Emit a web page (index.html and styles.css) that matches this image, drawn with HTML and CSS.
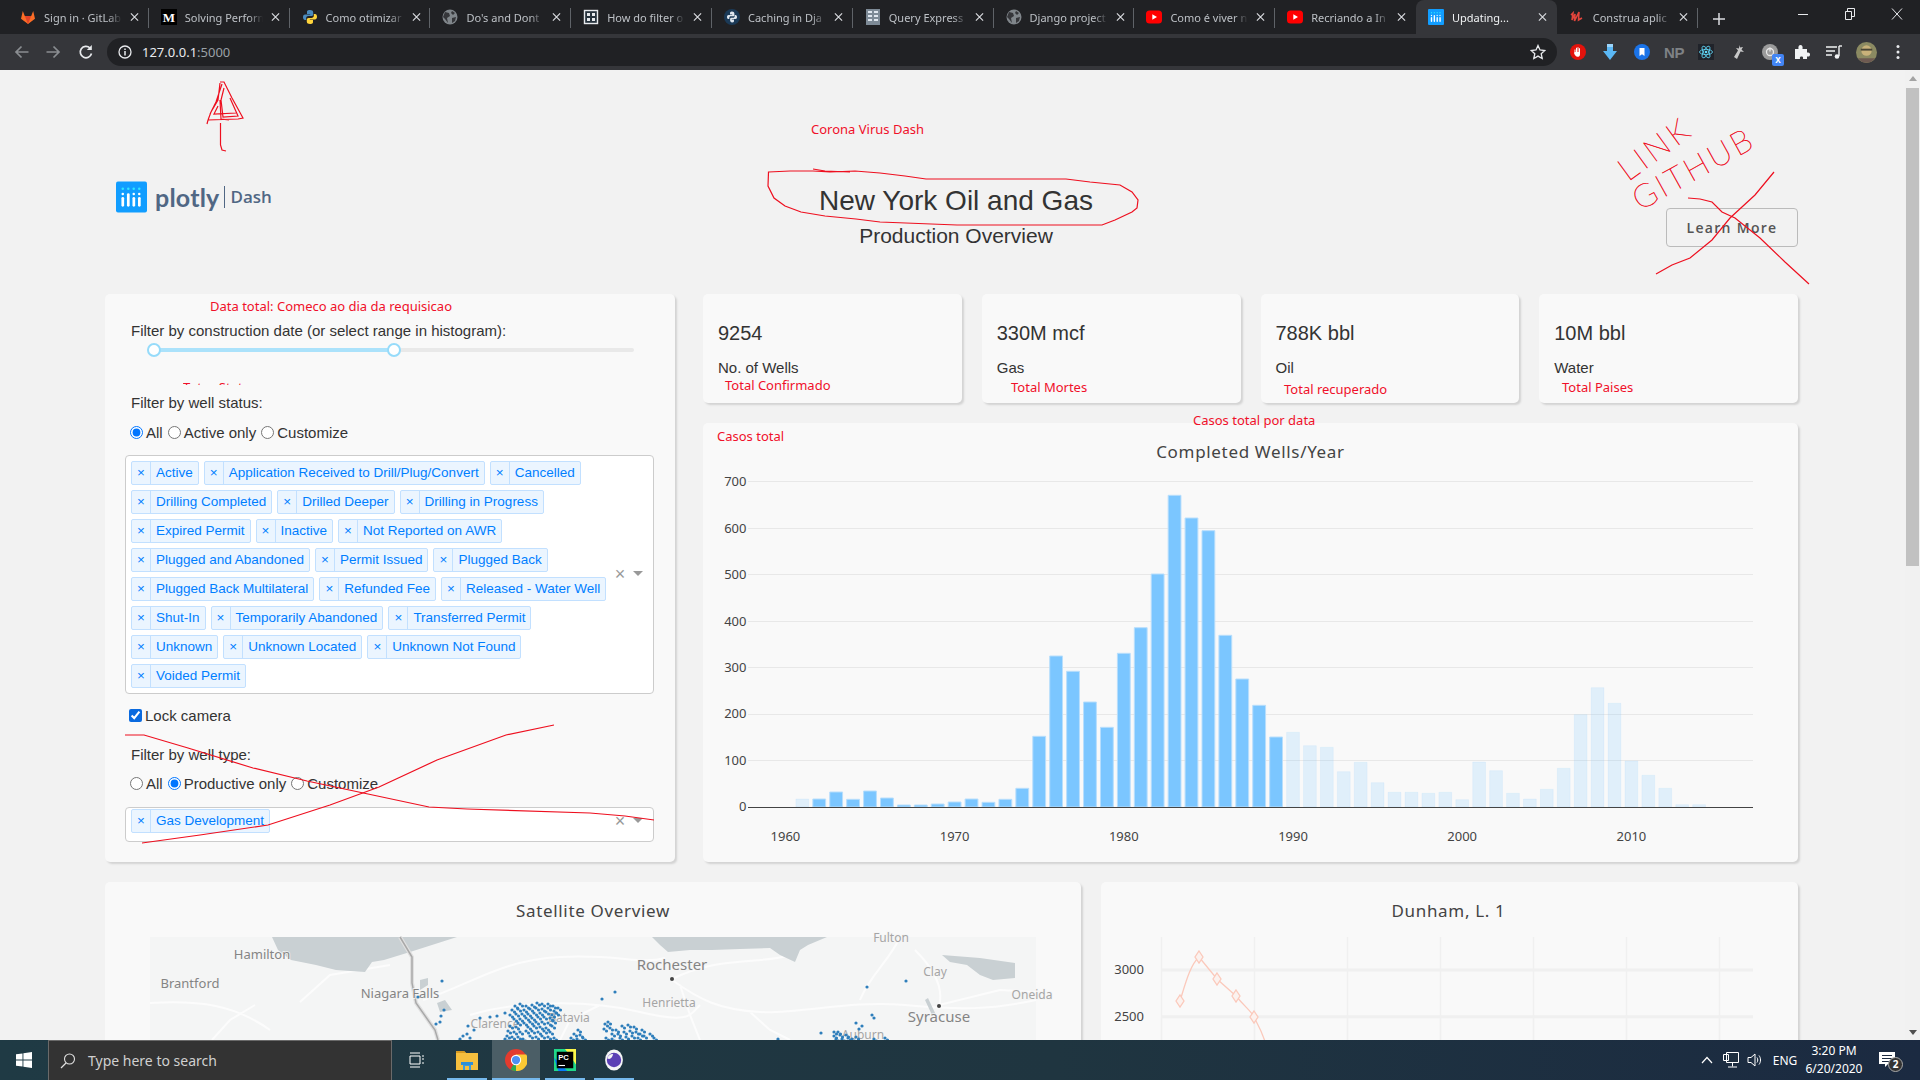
FILE: index.html
```html
<!DOCTYPE html>
<html lang="en">
<head>
<meta charset="utf-8">
<title>Updating...</title>
<link rel="stylesheet" href="styles.css">
</head>
<body>
<svg class="defs" width="0" height="0" aria-hidden="true">
  <symbol id="i-globe" viewBox="0 0 16 16"><circle cx="8" cy="8" r="7.5" fill="#80868b"/><path d="M3 3l4 1 1 3-3 2 1 5-3-4-2-2zM10 2l3 2-2 2-2-2zM10 9l4-1-1 4-3 2z" fill="#35363a"/></symbol>
  <symbol id="i-yt" viewBox="0 0 16 16"><rect y="1.5" width="16" height="13" rx="3.5" fill="#f00"/><path d="M6.3 5.2v5.6L11 8z" fill="#fff"/></symbol>
  <symbol id="i-py" viewBox="0 0 16 16"><path d="M8 1C5 1 5 2 5 3.5V5h3.2v.6H3.2C1.5 5.6 1 7 1 8.3s.6 2.7 2 2.7h1.2V9.3c0-1.300 1-2.200 2.300-2.200h3c1 0 1.700-.8 1.700-1.800V3.200C11.200 1.800 9.800 1 8 1z" fill="#4b8bbe"/><path d="M8 15c3 0 3-1 3-2.500V11H7.800v-.6h5c1.700 0 2.200-1.400 2.200-2.700S14.400 5 13 5h-1.200v1.700c0 1.300-1 2.200-2.300 2.200h-3c-1 0-1.700.8-1.700 1.800v2.100C4.800 14.200 6.200 15 8 15z" fill="#ffd43b"/></symbol>
  <symbol id="i-plotly" viewBox="0 0 32 32"><rect width="32" height="32" rx="2" fill="#119dff"/><g fill="#2ee6ff"><circle cx="7" cy="7.500" r="1.300"/><circle cx="12.700" cy="7.500" r="1.300"/><circle cx="18.300" cy="7.500" r="1.300"/><circle cx="24" cy="7.500" r="1.300"/></g><g fill="#fff"><circle cx="7" cy="13" r="1.300"/><circle cx="18.300" cy="13" r="1.300"/><circle cx="24" cy="13" r="1.300"/><rect x="5.600" y="16" width="2.800" height="10" rx="1.400"/><rect x="11.300" y="12" width="2.800" height="14" rx="1.400"/><rect x="17" y="16" width="2.800" height="10" rx="1.400"/><rect x="22.700" y="16" width="2.800" height="10" rx="1.400"/></g></symbol>
  <symbol id="i-x" viewBox="0 0 10 10"><path d="M1 1l8 8M9 1l-8 8" stroke="currentColor" stroke-width="1.300" fill="none"/></symbol>
</svg>

<div class="screen">
  <div class="tabstrip">
    <div class="tab"><svg class="fav" viewBox="0 0 16 16"><path d="M8 15L1 9.800 2.800 2l2 5h6.400l2-5L15 9.800z" fill="#fc6d26"/><path d="M8 15L4.800 7h6.400z" fill="#e24329"/></svg><span class="tab-title">Sign in · GitLab</span><svg class="tab-x"><use href="#i-x"/></svg></div>
    <div class="tab"><svg class="fav" viewBox="0 0 16 16"><rect width="16" height="16" fill="#000"/><text x="8" y="12.500" class="fav-m">M</text></svg><span class="tab-title">Solving Perform</span><svg class="tab-x"><use href="#i-x"/></svg></div>
    <div class="tab"><svg class="fav"><use href="#i-py"/></svg><span class="tab-title">Como otimizar</span><svg class="tab-x"><use href="#i-x"/></svg></div>
    <div class="tab"><svg class="fav"><use href="#i-globe"/></svg><span class="tab-title">Do's and Dont</span><svg class="tab-x"><use href="#i-x"/></svg></div>
    <div class="tab"><svg class="fav" viewBox="0 0 16 16"><rect x="1.500" y="1.500" width="13" height="13" fill="#26323c" stroke="#e8eaed" stroke-width="1.400"/><path d="M4 4h3v3H4zM9 4h3v3H9zM4 9h3v3H4zM9 9h3v3H9z" fill="#e8eaed"/></svg><span class="tab-title">How do filter o</span><svg class="tab-x"><use href="#i-x"/></svg></div>
    <div class="tab"><svg class="fav" viewBox="0 0 16 16"><circle cx="8" cy="8" r="8" fill="#1b3a57"/><path d="M8 2.500C6 2.500 6 3.500 6 4.500v1h2.200V6H4.500C3.300 6 3 7 3 8s.4 2 1.400 2h.9V8.800c0-.9.700-1.500 1.500-1.500h2.400c.7 0 1.200-.6 1.200-1.300V4.400c0-1.100-1-1.900-2.400-1.900zM8 13.500c2 0 2-1 2-2v-1H7.800V10h3.700c1.200 0 1.500-1 1.500-2s-.4-2-1.400-2h-.9v1.200c0 .9-.7 1.500-1.500 1.500H7.300c-.7 0-1.200.6-1.200 1.300v1.600c0 1.100 1 1.900 1.900 1.900z" fill="#dfe6ee"/></svg><span class="tab-title">Caching in Dja</span><svg class="tab-x"><use href="#i-x"/></svg></div>
    <div class="tab"><svg class="fav" viewBox="0 0 16 16"><rect x="1" y="0" width="14" height="16" fill="#7d8a96"/><path d="M3 2h4v2H3zM9 2h4v2H9zM3 6h4v2H3zM9 6h4v2H9zM3 10h4v2H3zM9 10h4v2H9z" fill="#dfe6ee"/></svg><span class="tab-title">Query Express</span><svg class="tab-x"><use href="#i-x"/></svg></div>
    <div class="tab"><svg class="fav"><use href="#i-globe"/></svg><span class="tab-title">Django project</span><svg class="tab-x"><use href="#i-x"/></svg></div>
    <div class="tab"><svg class="fav"><use href="#i-yt"/></svg><span class="tab-title">Como é viver n</span><svg class="tab-x"><use href="#i-x"/></svg></div>
    <div class="tab tab-prev"><svg class="fav"><use href="#i-yt"/></svg><span class="tab-title">Recriando a In</span><svg class="tab-x"><use href="#i-x"/></svg></div>
    <div class="tab tab-active"><svg class="fav"><use href="#i-plotly"/></svg><span class="tab-title">Updating...</span><svg class="tab-x"><use href="#i-x"/></svg></div>
    <div class="tab"><svg class="fav" viewBox="0 0 16 16"><path d="M2 6l2-2-1 7 3-6-.5 7L10 3l-.5 8 3.500-2" fill="none" stroke="#e2453c" stroke-width="1.600"/></svg><span class="tab-title">Construa aplic</span><svg class="tab-x"><use href="#i-x"/></svg></div>
    <svg class="newtab" viewBox="0 0 12 12"><path d="M6 0v12M0 6h12" stroke="#dadce0" stroke-width="1.500"/></svg>
    <div class="winctl">
      <svg viewBox="0 0 12 12"><path d="M1 6.500h10" stroke="#e8eaed"/></svg>
      <svg viewBox="0 0 12 12"><path d="M1.500 3.500h6v8h-6zM3.500 3.500v-3h7v8h-3" fill="none" stroke="#e8eaed"/></svg>
      <svg viewBox="0 0 12 12"><path d="M1 .5l10 11M11 .5l-10 11" stroke="#e8eaed"/></svg>
    </div>
  </div>

  <div class="toolbar">
    <svg class="nav" viewBox="0 0 16 16"><path d="M14.500 8H2M7.500 2.500L2 8l5.500 5.500" fill="none" stroke="#8a8d91" stroke-width="1.700"/></svg>
    <svg class="nav" viewBox="0 0 16 16"><path d="M1.500 8H14M8.500 2.500L14 8l-5.500 5.500" fill="none" stroke="#8a8d91" stroke-width="1.700"/></svg>
    <svg class="nav" viewBox="0 0 16 16"><path d="M13.500 9.500A5.700 5.700 0 1 1 12 4" fill="none" stroke="#e8eaed" stroke-width="1.700"/><path d="M13.800 1v5h-5z" fill="#e8eaed"/></svg>
    <div class="omnibox">
      <svg class="info" viewBox="0 0 14 14"><circle cx="7" cy="7" r="6" fill="none" stroke="#e8eaed" stroke-width="1.300"/><path d="M7 6v4.500M7 3.400v1.500" stroke="#e8eaed" stroke-width="1.500"/></svg>
      <span class="url">127.0.0.1<span class="url-port">:5000</span></span>
      <svg class="star" viewBox="0 0 16 16"><path d="M8 1.500l2 4.500 4.800.5-3.600 3.200 1 4.800L8 12.100l-4.200 2.400 1-4.800L1.200 6.500 6 6z" fill="none" stroke="#e8eaed" stroke-width="1.300"/></svg>
    </div>
    <div class="exts">
      <span class="ext"><svg viewBox="0 0 16 16"><circle cx="8" cy="8" r="8" fill="#e3120b"/><path d="M4.500 8V5.500h1V8h.5V3.800h1V8h.5V3.300h1V8h.5V4.300h1v5.900C10 12 9 12.800 7.500 12.800 6 12.800 5 11.500 4 9l.5-1z" fill="#fff"/></svg></span>
      <span class="ext"><svg viewBox="0 0 16 16"><path d="M5 0h6v7h4l-7 9-7-9h4z" fill="#5bb8f5"/><path d="M5 0h6v3H5z" fill="#9ad4fa"/></svg></span>
      <span class="ext"><svg viewBox="0 0 16 16"><circle cx="8" cy="8" r="8" fill="#1a73e8"/><path d="M5.500 4h5v8L8 10.300 5.500 12z" fill="#fff"/></svg></span>
      <span class="ext ext-np">NP</span>
      <span class="ext"><svg viewBox="0 0 16 16"><rect width="16" height="16" fill="#20232a"/><g fill="none" stroke="#61dafb" stroke-width=".8"><ellipse cx="8" cy="8" rx="6.500" ry="2.600"/><ellipse cx="8" cy="8" rx="6.500" ry="2.600" transform="rotate(60 8 8)"/><ellipse cx="8" cy="8" rx="6.500" ry="2.600" transform="rotate(120 8 8)"/></g><circle cx="8" cy="8" r="1.300" fill="#61dafb"/></svg></span>
      <span class="ext"><svg viewBox="0 0 16 16"><path d="M9 1l1 2.500L13 3l-1.500 2.500L14 8l-3.500-.5L7 15l-3-2 4-6.500L6 4l3 .5z" fill="#c8c8c8"/></svg></span>
      <span class="ext ext-badged"><svg viewBox="0 0 16 16"><circle cx="8" cy="8" r="8" fill="#9b9b9b"/><circle cx="8" cy="8" r="3.500" fill="none" stroke="#e8e8e8" stroke-width="1.300"/><path d="M8 3.500v4" stroke="#e8e8e8" stroke-width="1.300"/></svg><span class="badge-x">x</span></span>
      <span class="ext"><svg viewBox="0 0 16 16"><path d="M1 5h3.500C4 2.500 5 1 6.500 1S9 2.500 8.500 5H13v3.500c2.500-.5 3 .8 3 2s-.5 2.500-3 2V15H9c.5-2-.5-2.500-1.500-2.500S5.500 13 6 15H1z" fill="#f1f3f4"/></svg></span>
      <span class="ext"><svg viewBox="0 0 16 16"><path d="M0 3h11M0 7h9M0 11h6" stroke="#f1f3f4" stroke-width="1.400"/><path d="M13 2v10" stroke="#f1f3f4" stroke-width="1.400"/><path d="M13 2h3" stroke="#f1f3f4" stroke-width="1.400"/><circle cx="11" cy="12.500" r="2.300" fill="#f1f3f4"/></svg></span>
      <span class="ext"><svg class="avatar" viewBox="0 0 22 22"><circle cx="11" cy="11" r="11" fill="#8b8a62"/><path d="M2 17h18a11 11 0 0 1-18 0z" fill="#6e5a52"/><circle cx="11" cy="9" r="5.500" fill="#c9b27a"/><path d="M5 7h12v2H5z" fill="#4a4636"/></svg></span>
      <span class="ext"><svg class="dots" viewBox="0 0 4 16"><circle cx="2" cy="2.500" r="1.500" fill="#e8eaed"/><circle cx="2" cy="8" r="1.500" fill="#e8eaed"/><circle cx="2" cy="13.500" r="1.500" fill="#e8eaed"/></svg></span>
    </div>
  </div>

  <div class="viewport">
    <main class="page">
      <header class="head">
        <div class="logo">
          <svg class="logo-mark"><use href="#i-plotly"/></svg>
          <span class="logo-word">plotly</span>
          <span class="logo-dash">Dash</span>
        </div>
        <div class="title">
          <h1>New York Oil and Gas</h1>
          <h2>Production Overview</h2>
        </div>
        <a class="learn">Learn More</a>
      </header>

      <div class="main-row">
        <section class="card filters">
          <div class="lbl">Filter by construction date (or select range in histogram):</div>
          <div class="slider"><div class="slider-fill"><span class="handle"></span><span class="handle"></span></div></div>
          <div class="lbl lbl-status">Filter by well status:</div>
          <div class="radios">
            <label><input type="radio" name="a" checked>All</label>
            <label><input type="radio" name="a">Active only</label>
            <label><input type="radio" name="a">Customize</label>
          </div>
          <div class="select select-big">
            <div class="tags">
              <span class="tag"><i>×</i><b>Active</b></span>
              <span class="tag"><i>×</i><b>Application Received to Drill/Plug/Convert</b></span>
              <span class="tag"><i>×</i><b>Cancelled</b></span>
              <span class="tag"><i>×</i><b>Drilling Completed</b></span>
              <span class="tag"><i>×</i><b>Drilled Deeper</b></span>
              <span class="tag"><i>×</i><b>Drilling in Progress</b></span>
              <span class="tag"><i>×</i><b>Expired Permit</b></span>
              <span class="tag"><i>×</i><b>Inactive</b></span>
              <span class="tag"><i>×</i><b>Not Reported on AWR</b></span>
              <span class="tag"><i>×</i><b>Plugged and Abandoned</b></span>
              <span class="tag"><i>×</i><b>Permit Issued</b></span>
              <span class="tag"><i>×</i><b>Plugged Back</b></span>
              <span class="tag"><i>×</i><b>Plugged Back Multilateral</b></span>
              <span class="tag"><i>×</i><b>Refunded Fee</b></span>
              <span class="tag"><i>×</i><b>Released - Water Well</b></span>
              <span class="tag"><i>×</i><b>Shut-In</b></span>
              <span class="tag"><i>×</i><b>Temporarily Abandoned</b></span>
              <span class="tag"><i>×</i><b>Transferred Permit</b></span>
              <span class="tag"><i>×</i><b>Unknown</b></span>
              <span class="tag"><i>×</i><b>Unknown Located</b></span>
              <span class="tag"><i>×</i><b>Unknown Not Found</b></span>
              <span class="tag"><i>×</i><b>Voided Permit</b></span>
            </div>
            <span class="sel-clear">×</span><span class="sel-arrow"></span>
          </div>
          <label class="lock"><input type="checkbox" checked>Lock camera</label>
          <div class="lbl lbl-type">Filter by well type:</div>
          <div class="radios radios-type">
            <label><input type="radio" name="b">All</label>
            <label><input type="radio" name="b" checked>Productive only</label>
            <label><input type="radio" name="b">Customize</label>
          </div>
          <div class="select select-small">
            <div class="tags tags-small"><span class="tag"><i>×</i><b>Gas Development</b></span></div>
            <span class="sel-clear">×</span><span class="sel-arrow"></span>
          </div>
        </section>

        <div class="right-col">
          <div class="stats">
            <div class="card stat"><div class="stat-val">9254</div><div class="stat-lbl">No. of Wells</div></div>
            <div class="card stat"><div class="stat-val">330M mcf</div><div class="stat-lbl">Gas</div></div>
            <div class="card stat"><div class="stat-val">788K bbl</div><div class="stat-lbl">Oil</div></div>
            <div class="card stat"><div class="stat-val">10M bbl</div><div class="stat-lbl">Water</div></div>
          </div>
          <section class="card chart">
            <svg class="plot" viewBox="703 423 1095 439">
              <text x="1250.500" y="458" class="ch-title">Completed Wells/Year</text>
              <g class="grid">
                <path d="M748 481.500H1753M748 528.500H1753M748 574.500H1753M748 621.500H1753M748 667.500H1753M748 714.500H1753M748 760.500H1753"/>
              </g>
              <g class="ticks ticks-y">
                <text x="746.500" y="486">700</text><text x="746.500" y="532.500">600</text><text x="746.500" y="579">500</text><text x="746.500" y="625.500">400</text><text x="746.500" y="671.500">300</text><text x="746.500" y="718">200</text><text x="746.500" y="764.500">100</text><text x="746.500" y="811">0</text>
              </g>
              <g class="ticks ticks-x">
                <text x="785.400" y="840.500">1960</text><text x="954.600" y="840.500">1970</text><text x="1123.800" y="840.500">1980</text><text x="1293" y="840.500">1990</text><text x="1462.200" y="840.500">2000</text><text x="1631.400" y="840.500">2010</text>
              </g>
              <g transform="translate(779 807) scale(16.92 -1)">
                <g class="bar-off">
                  <rect x="1" width=".757" height="8"/>
                  <rect x="30" width=".757" height="74.700"/><rect x="31" width=".757" height="61.300"/><rect x="32" width=".757" height="59.700"/><rect x="33" width=".757" height="35.300"/><rect x="34" width=".757" height="44.700"/><rect x="35" width=".757" height="24.300"/><rect x="36" width=".757" height="14.700"/><rect x="37" width=".757" height="14.700"/><rect x="38" width=".757" height="13.700"/><rect x="39" width=".757" height="14.700"/><rect x="40" width=".757" height="7.300"/><rect x="41" width=".757" height="45"/><rect x="42" width=".757" height="36.300"/><rect x="43" width=".757" height="13.700"/><rect x="44" width=".757" height="8"/><rect x="45" width=".757" height="17.700"/><rect x="46" width=".757" height="38.700"/><rect x="47" width=".757" height="92.300"/><rect x="48" width=".757" height="119.300"/><rect x="49" width=".757" height="103.700"/><rect x="50" width=".757" height="46"/><rect x="51" width=".757" height="31.700"/><rect x="52" width=".757" height="18.700"/><rect x="53" width=".757" height="2.300"/><rect x="54" width=".757" height="2.300"/>
                </g>
                <g class="bar-on">
                  <rect x="2" width=".757" height="8"/><rect x="3" width=".757" height="15"/><rect x="4" width=".757" height="7.700"/><rect x="5" width=".757" height="16"/><rect x="6" width=".757" height="9"/><rect x="7" width=".757" height="2"/><rect x="8" width=".757" height="2"/><rect x="9" width=".757" height="3"/><rect x="10" width=".757" height="5"/><rect x="11" width=".757" height="8"/><rect x="12" width=".757" height="4.700"/><rect x="13" width=".757" height="7.700"/><rect x="14" width=".757" height="18.700"/><rect x="15" width=".757" height="70.700"/><rect x="16" width=".757" height="151"/><rect x="17" width=".757" height="135.700"/><rect x="18" width=".757" height="105"/><rect x="19" width=".757" height="79.700"/><rect x="20" width=".757" height="153.700"/><rect x="21" width=".757" height="179.300"/><rect x="22" width=".757" height="233"/><rect x="23" width=".757" height="311.700"/><rect x="24" width=".757" height="289"/><rect x="25" width=".757" height="276.300"/><rect x="26" width=".757" height="171.700"/><rect x="27" width=".757" height="128"/><rect x="28" width=".757" height="101.700"/><rect x="29" width=".757" height="70"/>
                </g>
              </g>
              <path class="zero" d="M748 807.500H1753"/>
            </svg>
          </section>
        </div>
      </div>

      <div class="bottom-row">
        <section class="card lower">
          <svg class="plot" viewBox="105 882 976 400">
            <text x="593" y="917" class="ch-title">Satellite Overview</text>
            <rect x="150" y="937" width="886" height="345" class="map-land"/>
            <g class="map-roads">
              <path d="M150 1003C200 1000 235 1005 270 1030M212 1040L230 1020 255 1005M300 1002L330 975 390 965M423 1000C470 985 500 960 560 957S640 965 665 958M470 1015C520 1000 590 1000 640 1012S690 1015 700 1005M672 979C720 955 760 965 790 955M672 980C700 1000 720 1010 760 1012S850 1000 905 1005 990 1010 1036 1000M560 1040L570 1020 600 1005M860 1000C870 975 890 960 900 937M939 1006C945 985 930 965 915 950M939 1005L1000 990 1036 992M750 1012L770 1030 790 1040M680 985L690 1015 700 1040"/>
            </g>
            <path class="map-lake" d="M272 937L278 950 291 960 316 965 336 970 365 972 372 962 384 960 410 952 457 937zM652 937L660 945 668 952 690 950 712 950 740 949 770 948 780 955 795 962 800 950 808 945 827 937zM942 955L950 962 967 965 980 975 993 980 1015 978 1015 963 980 958zM420 990L428 985 428 978 420 980zM437 1003L445 1000 452 1010 440 1012zM925 1000L932 1015 936 1015 928 998z"/>
            <path class="map-border-h" d="M400 937L412 957 412 983 416 1003 435 1030 438 1040"/>
            <path class="map-border" d="M400 937L412 957 412 983 416 1003 435 1030 438 1040"/>
            <g class="map-labels">
              <text x="262" y="959" class="ml-md">Hamilton</text>
              <text x="190" y="988" class="ml-md">Brantford</text>
              <text x="400" y="998" class="ml-md">Niagara Falls</text>
              <text x="672" y="970" class="ml-lg">Rochester</text>
              <text x="669" y="1007" class="ml-sm">Henrietta</text>
              <text x="939" y="1022" class="ml-lg">Syracuse</text>
              <text x="935" y="976" class="ml-sm">Clay</text>
              <text x="891" y="942" class="ml-sm">Fulton</text>
              <text x="1032" y="999" class="ml-sm">Oneida</text>
              <text x="569" y="1022" class="ml-sm">Batavia</text>
              <text x="495" y="1028" class="ml-sm">Clarence</text>
              <text x="863" y="1039" class="ml-sm">Auburn</text>
            </g>
            <circle cx="672" cy="979" r="2" class="map-city"/><circle cx="939" cy="1006" r="2" class="map-city"/>
            <path class="map-dots" d="M442 981h0M615 992h0M602 999h0M906 981h0M867 987h0M872 1015h0M874 1018h0M856 1023h0M862 1026h0M859 1029h0M444 1010h0M441 1016h0M440 1022h0M436 1024h0M418 997h0M821 1033h0M505 1013h0M497 1016h0M490 1017h0M480 1018h0M468 1026h0M474 1030h0M467 1034h0M463 1036h0M470 1038h0M460 1039h0M778 1039h0"/>
            <path id="cluster" class="map-dots" d="M515 1006h0M520 1004h0M526 1006h0M532 1005h0M537 1003h0M542 1004h0M548 1004h0M553 1006h0M558 1008h0M512 1010h0M518 1009h0M524 1010h0M530 1009h0M536 1008h0M542 1009h0M548 1008h0M554 1011h0M510 1015h0M516 1014h0M522 1014h0M528 1014h0M534 1013h0M540 1013h0M546 1012h0M552 1015h0M556 1013h0M514 1019h0M520 1019h0M526 1018h0M532 1018h0M538 1017h0M544 1017h0M550 1018h0M518 1023h0M524 1023h0M530 1022h0M536 1022h0M542 1022h0M548 1023h0M553 1021h0M510 1026h0M516 1027h0M528 1027h0M534 1026h0M540 1027h0M546 1028h0M552 1026h0M508 1031h0M514 1032h0M520 1032h0M526 1031h0M532 1031h0M538 1032h0M544 1031h0M550 1032h0M507 1036h0M512 1037h0M518 1037h0M530 1036h0M536 1037h0M542 1036h0M548 1037h0M505 1039h0M523 1039h0M554 1038h0M578 1030h0M574 1034h0M580 1035h0M571 1038h0M577 1039h0M583 1038h0M605 1024h0M608 1022h0M604 1029h0M610 1028h0M616 1030h0M622 1026h0M628 1025h0M634 1027h0M612 1034h0M618 1034h0M624 1032h0M630 1031h0M636 1032h0M642 1030h0M606 1038h0M612 1039h0M620 1038h0M626 1037h0M632 1036h0M638 1038h0M644 1036h0M650 1034h0M654 1038h0M640 1034h0M834 1032h0M838 1032h0M834 1036h0M840 1035h0M846 1035h0M836 1039h0M842 1039h0M848 1038h0M852 1039h0M856 1037h0M874 1039h0M885 1038h0"/>
            <use href="#cluster" transform="translate(2.500 2)"/>
          </svg>
        </section>
        <section class="card lower">
          <svg class="plot" viewBox="1101 882 697 400">
            <text x="1448.500" y="917" class="ch-title">Dunham, L. 1</text>
            <path class="dg-v" d="M1161.500 937V1282M1254.500 937V1282M1347.500 937V1282M1440.500 937V1282M1533.500 937V1282M1626.500 937V1282M1719.500 937V1282"/>
            <path class="dg-h" d="M1161 970H1753M1161 1016.700H1753"/>
            <g class="ticks ticks-y">
              <text x="1144" y="973.500">3000</text><text x="1144" y="1020.500">2500</text>
            </g>
            <path class="d-line" d="M1180 1001C1185 985 1190 965 1199 957L1217 979 1236 996C1245 1007 1252 1012 1254 1017S1262 1030 1266 1045"/>
            <path class="d-mark" d="M1180 995l4 6-4 6-4-6zM1199 951l4 6-4 6-4-6zM1217 973l4 6-4 6-4-6zM1236 990l4 6-4 6-4-6zM1254 1011l4 6-4 6-4-6z"/>
          </svg>
        </section>
      </div>
    </main>

    <div class="scrollbar">
      <span class="sb-up"></span>
      <span class="sb-thumb"></span>
      <span class="sb-down"></span>
    </div>

    <svg class="ink" viewBox="0 70 1905 970">
      <text x="811" y="134" class="note">Corona Virus Dash</text>
      <text x="210" y="311" class="note">Data total: Comeco ao dia da requisicao</text>
      <text x="725" y="390" class="note">Total Confirmado</text>
      <text x="1011" y="391.500" class="note">Total Mortes</text>
      <text x="1284" y="393.500" class="note">Total recuperado</text>
      <text x="1562" y="391.500" class="note">Total Paises</text>
      <text x="1193" y="425" class="note">Casos total por data</text>
      <text x="717" y="441" class="note">Casos total</text>
      <svg x="183" y="382" width="90" height="3" viewBox="183 382 90 3"><text x="183" y="391.500" class="note">Totes Status :</text></svg>
      <text x="1628" y="182" class="scrawl" transform="rotate(-36 1628 182)">LINK</text>
      <text x="1640" y="211" class="scrawl scrawl-wide" transform="rotate(-29 1640 211)">GITHUB</text>
      <path class="stroke" d="M220 82L224 82 232 98 243 118 238 119 208 120 207 124M220 83L218 100 211 112 208 120M224 88L221 100 223 117 238 116 230 98M218 106L214 114 236 113M220 100L221 119 229 120M222 84L216 102 210 114"/>
      <path class="stroke" d="M220.500 123L220.500 145 222 150 226 151"/>
      <path class="stroke" d="M768.500 172L790 171 813 171 830 172 855 171 880 173 905 176 926 179 1066 179 1090 182 1120 185 1132 192 1138 200 1137 208 1132 212 1115 220 1102 225 957 225 880 222 856 219 825 216 801 212 785 206 774 198 768 186zM813 169L825 171 850 172"/>
      <path class="stroke" d="M1774 172L1755 195 1730 218 1712 240 1690 258 1672 265 1656 274"/>
      <path class="stroke" d="M1688 198L1700 199 1712 202 1722 212 1735 218 1760 238 1785 262 1809 284"/>
      <path class="stroke" d="M125 735L144 735 188 748 253 768 307 781 368 794 429 807 467 809 590 813 625 816 654 820"/>
      <path class="stroke" d="M554 725L506 735 437 760 379 787 330 805 268 825 200 835 142 843"/>
    </svg>
  </div>

  <footer class="taskbar">
    <span class="tb-start"><svg viewBox="0 0 16 16"><path d="M0 2.300L6.500 1.400V7.500H0zM7.400 1.300L16 0V7.500H7.400zM0 8.400H6.500V14.600L0 13.700zM7.400 8.400H16V16L7.400 14.800z" fill="#fff"/></svg></span>
    <div class="tb-search"><svg viewBox="0 0 16 16"><circle cx="9.500" cy="6" r="5" fill="none" stroke="#e0e0e0" stroke-width="1.100"/><path d="M6 10L1 15" stroke="#e0e0e0" stroke-width="1.200"/></svg><span>Type here to search</span></div>
    <span class="tb-view"><svg viewBox="0 0 16 16"><path d="M2 1h10M2 15h10M2 4h10v8H2zM14 4h2M14 7h2M14 11h2" fill="none" stroke="#fff"/></svg></span>
    <div class="tb-apps">
      <span class="tb-app tb-open"><svg viewBox="0 0 22 20"><path d="M0 1h8l2 2h12v17H0z" fill="#f6bf3e"/><path d="M0 1h8l2 2H0z" fill="#d69a23"/><path d="M7 12h8v8h-2v-4H9v4H7z" fill="#3b9be0"/><path d="M5 12h12v3H5z" fill="#2e8fd9"/></svg></span>
      <span class="tb-app tb-active"><svg viewBox="0 0 32 32"><circle cx="16" cy="16" r="16" fill="#e33b2e"/><path d="M16 16L29.900 24A16 16 0 0 1 8 29.900z" fill="#2fa84f"/><path d="M16 8H30.900A16 16 0 0 1 16 32z" fill="#fcc934"/><circle cx="16" cy="16" r="7.500" fill="#fff"/><circle cx="16" cy="16" r="6" fill="#4e8ff2"/></svg></span>
      <span class="tb-app tb-open"><svg viewBox="0 0 20 20"><path d="M0 0h20v20H0z" fill="#21d789"/><path d="M10 0h10v14z" fill="#fcf84a"/><path d="M0 8l4 12h8z" fill="#087cfa"/><rect x="2.500" y="2.500" width="15" height="15" fill="#000"/><text x="3.800" y="10" class="pc">PC</text><path d="M4 15h6" stroke="#fff"/></svg></span>
      <span class="tb-app tb-open"><svg viewBox="0 0 22 26"><ellipse cx="11" cy="13" rx="10.500" ry="12.500" fill="#f4f4f6"/><circle cx="11" cy="13" r="8.500" fill="#5b3fb5"/><path d="M3 11C6 13 9 11 10 6 6 6 4 8 3 11z" fill="#f4f4f6"/></svg></span>
    </div>
    <div class="tb-tray">
      <span class="tr tr-chev"><svg viewBox="0 0 12 8"><path d="M1 7l5-5.500L11 7" fill="none" stroke="#fff" stroke-width="1.200"/></svg></span>
      <span class="tr tr-net"><svg viewBox="0 0 16 16"><path d="M3.500 .5h12v10h-12zM.5 2.500h5v6h-5zM9.500 10.500v4M5 15h9" fill="#1f2f40" stroke="#fff"/></svg></span>
      <span class="tr tr-vol"><svg viewBox="0 0 16 16"><path d="M1 5.500h3L8 2v12l-4-3.500H1zM10 5.500c1 1.500 1 3.500 0 5M12 3.500c2 2.500 2 6.500 0 9" fill="none" stroke="#fff"/></svg></span>
      <span class="tr tr-eng">ENG</span>
      <span class="tr tr-clock"><span>3:20 PM</span><span>6/20/2020</span></span>
      <span class="tr tr-note"><svg viewBox="0 0 16 16"><path d="M0 0h16v12H9l-3 3v-3H0z" fill="#fff"/><path d="M3 3.500h10M3 6.500h10M3 9.500h7" stroke="#1c2a40"/></svg><span class="note-badge">2</span></span>
    </div>
  </footer>
</div>
</body>
</html>
```

FILE: styles.css
```css
* { box-sizing: border-box; }
html, body { margin: 0; padding: 0; overflow: hidden; }
body { font-family: "Liberation Sans", Arial, sans-serif; color: #333; }
.defs { position: absolute; }
.screen { width: 1920px; height: 1080px; display: flex; flex-direction: column; overflow: hidden; }

/* browser chrome */
.tabstrip { height: 34px; flex: none; background: #202124; display: flex; align-items: stretch; padding-left: 8px; }
.tab { flex: 0 0 140.8px; display: flex; align-items: center; padding-left: 12px; position: relative; color: #bdc1c6; font: 11px "Noto Sans", sans-serif; }
.tab::after { content: ""; position: absolute; right: 0; top: 8px; height: 20px; width: 1px; background: #5f6368; }
.tab-prev::after, .tab-active::after { display: none; }
.tab-active { background: #35363a; border-radius: 8px 8px 0 0; color: #f1f3f4; }
.fav { width: 16px; height: 16px; flex: none; }
.fav-m { font: 700 13px "Liberation Serif", serif; fill: #fff; text-anchor: middle; }
.pc { font: 700 7px "Liberation Sans", sans-serif; fill: #fff; }
.tab-title { width: 78px; margin-left: 8px; white-space: nowrap; overflow: hidden; -webkit-mask-image: linear-gradient(90deg, #000 82%, transparent); mask-image: linear-gradient(90deg, #000 82%, transparent); }
.tab-x { width: 9px; height: 10px; margin-left: 8px; flex: none; color: #dadce0; }
.newtab { width: 12px; height: 12px; margin: 13px 0 0 15px; flex: none; }
.winctl { margin-left: auto; display: flex; gap: 35px; padding: 8px 17px 0 0; }
.winctl svg { width: 12px; height: 12px; }

.toolbar { height: 36px; flex: none; background: #35363a; display: flex; align-items: center; position: relative; }
.nav { width: 16px; height: 16px; margin-left: 14px; flex: none; }
.nav + .nav { margin-left: 15px; }
.nav + .nav + .nav { margin-left: 17px; }
.omnibox { margin-left: 13px; width: 1450px; height: 28px; border-radius: 14px; background: #202124; display: flex; align-items: center; padding-left: 11px; }
.info { width: 14px; height: 14px; }
.url { margin-left: 10px; font: 13px "Noto Sans", sans-serif; color: #e8eaed; }
.url-port { color: #9aa0a6; }
.star { width: 16px; height: 16px; margin-left: auto; margin-right: 11px; }
.exts { display: flex; margin-left: 5px; }
.ext { width: 32px; height: 28px; display: flex; align-items: center; justify-content: center; position: relative; }
.ext svg { width: 16px; height: 16px; }
.ext .avatar { width: 21px; height: 21px; }
.ext .dots { width: 4px; height: 16px; }
.ext-np { font: 700 15px "Liberation Sans Narrow", "Liberation Sans", sans-serif; color: #7f8286; letter-spacing: -.5px; }
.badge-x { position: absolute; right: 2px; bottom: 0; width: 12px; height: 12px; border-radius: 2px; background: #4285f4; color: #fff; font: 700 10px/11px "Liberation Sans", sans-serif; text-align: center; }

/* viewport */
.viewport { flex: 1; position: relative; display: flex; overflow: hidden; background: #f2f2f2; }
.page { width: 1905px; flex: none; padding: 0 107px 0 105px; }
.scrollbar { width: 15px; flex: none; display: flex; flex-direction: column; align-items: center; background: #f1f1f1; }
.sb-up { width: 0; height: 0; margin-top: 6px; border: 4.5px solid transparent; border-top: 0; border-bottom: 5px solid #a3a3a3; }
.sb-thumb { width: 13px; height: 478px; margin-top: 7px; background: #c1c1c1; }
.sb-down { width: 0; height: 0; margin-top: auto; margin-bottom: 5px; border: 4.5px solid transparent; border-bottom: 0; border-top: 5px solid #505050; }

.ink { position: absolute; left: 0; top: 0; width: 1905px; height: 970px; pointer-events: none; }
.note { font: 13px "Noto Sans", sans-serif; fill: #f0102a; }
.stroke { fill: none; stroke: #ee0f1f; stroke-width: 1.200; }
.scrawl { font: 100 32px Lato, sans-serif; fill: #ee0f1f; stroke: #ee0f1f; stroke-width: .5px; letter-spacing: 4px; }
.scrawl-wide { letter-spacing: 3px; }

/* header */
.head { height: 224px; display: grid; grid-template-columns: 569px 1fr 560px; align-items: start; }
.logo { display: flex; align-items: center; margin: 111px 0 0 11px; color: #506784; }
.logo-mark { width: 31px; height: 32px; }
.logo-word { font: 700 25px/32px Lato, sans-serif; margin-left: 8px; letter-spacing: .2px; }
.logo-dash { font: 600 17px/22px "Open Sans", sans-serif; margin-left: 5px; padding-left: 5px; border-left: 1px solid #506784; }
.title { margin-top: 113px; text-align: center; }
.title h1 { margin: 0; font: 400 28px/36px "Liberation Sans", sans-serif; color: #333; }
.title h2 { margin: 4px 0 0; font: 400 21px/26px "Liberation Sans", sans-serif; color: #333; }
.learn { justify-self: end; margin-top: 138px; width: 132px; height: 39px; border: 1px solid #bbb; border-radius: 4px; display: flex; align-items: center; justify-content: center; font: 600 14px "Open Sans", sans-serif; letter-spacing: 1.300px; color: #555; }

/* cards */
.card { background: #f9f9f9; border-radius: 5px; box-shadow: 2px 2px 2px lightgrey; }
.main-row { display: grid; grid-template-columns: 570px 1095px; gap: 28px; height: 568px; }
.right-col { display: flex; flex-direction: column; gap: 20px; }
.stats { display: grid; grid-template-columns: repeat(4, 1fr); gap: 20px; height: 109px; }
.stat { padding: 27px 14px 0 15px; }
.stat-val { font-size: 20px; line-height: 24px; }
.stat-lbl { font-size: 15px; line-height: 20px; margin-top: 13px; }
.chart { height: 439px; }
.plot { display: block; width: 100%; height: 100%; }

.filters { padding: 27px 21px 0 20px; font-size: 15px; }
.lbl { padding-left: 6px; line-height: 20px; }
.lbl-status { margin-top: 36px; }
.lbl-type { margin-top: 19px; }
.slider { height: 14px; margin: 2px 20px 0 22px; position: relative; }
.slider::before { content: ""; position: absolute; left: 0; right: 0; top: 5px; height: 4px; border-radius: 2px; background: #e9e9e9; }
.slider-fill { position: absolute; left: 7px; width: 240px; top: 5px; height: 4px; background: #abe2fb; }
.handle { position: absolute; top: -5px; left: -7px; width: 14px; height: 14px; border-radius: 50%; background: #fff; border: 2px solid #96dbfa; }
.handle + .handle { left: auto; right: -7px; }
.radios { display: flex; line-height: 20px; margin-top: 10px; }
.radios-type { margin-top: 9px; }
.radios label, .lock { display: flex; align-items: center; }
.radios input { margin: 0 3px 2px 5px; width: 13px; height: 13px; }
.lock { margin-top: 12px; line-height: 20px; padding-left: 4px; }
.lock input { margin: 0 3px 2px 0; width: 13px; height: 13px; accent-color: #0a6adf; }

.select { margin-top: 12px; border: 1px solid #ccc; border-radius: 4px; background: #fff; display: flex; align-items: center; padding: 0 3px 2px 0; }
.select-big { height: 239px; }
.select-small { height: 35px; margin-top: 13px; padding-bottom: 8px; }
.tags { flex: 1; min-width: 0; display: flex; flex-wrap: wrap; gap: 5px; padding-left: 5px; align-self: flex-start; padding-top: 5px; }
.tags-small { padding-top: 1px; }
.tag { display: flex; height: 24px; border: 1px solid #c2e0ff; border-radius: 2px; background: #ebf5ff; color: #007eff; font-size: 13.500px; line-height: 21px; }
.tag i { font-style: normal; width: 19px; text-align: center; border-right: 1px solid #c2e0ff; }
.tag b { font-weight: 400; padding: 0 5px; white-space: nowrap; }
.sel-clear { width: 14px; margin: 0 -2px 0 2px; text-align: center; color: #999; font-size: 18px; line-height: 18px; }
.sel-arrow { width: 25px; display: flex; justify-content: center; }
.sel-arrow::before { content: ""; border: 5px solid transparent; border-bottom: 0; border-top-color: #999; }

/* charts */
.ch-title { font: 17px "Noto Sans", sans-serif; fill: #444; text-anchor: middle; letter-spacing: .67px; }
.ticks text { font: 13px "Noto Sans", sans-serif; fill: #444; }
.ticks-y text { text-anchor: end; }
.ticks-x text { text-anchor: middle; }
.grid path { stroke: #e8e8e8; fill: none; }
.bar-on rect { fill: #7bc6ff; stroke: #b8defc; vector-effect: non-scaling-stroke; stroke-width: 1; }
.bar-off rect { fill: #7bc7ff; fill-opacity: .2; stroke: #7bc7ff; stroke-opacity: .1; vector-effect: non-scaling-stroke; stroke-width: 1; }
.zero { stroke: #444; fill: none; }

.bottom-row { display: grid; grid-template-columns: 976px 697px; gap: 20px; margin-top: 20px; height: 400px; }
.lower { height: 400px; overflow: hidden; }
.map-land { fill: #f4f5f5; }
.map-roads path { fill: none; stroke: #fcfcfc; stroke-width: 2; }
.map-lake { fill: #c9d0d3; }
.map-border-h { fill: none; stroke: #e0e0e0; stroke-width: 4; }
.map-border { fill: none; stroke: #a9a9a9; stroke-width: 1.500; }
.map-labels text { font-family: "Noto Sans", sans-serif; fill: #848484; text-anchor: middle; stroke: #f6f6f6; stroke-width: 1.500; paint-order: stroke; }
.ml-lg { font-size: 15px; }
.ml-md { font-size: 13px; }
.ml-sm { font-size: 12px; fill: #a5a5a5 !important; }
.map-city { fill: #444; }
.map-dots { fill: none; stroke: #2e7ebb; stroke-width: 3.200; stroke-linecap: round; }
.dg-v { stroke: #f0f0f0; fill: none; stroke-width: 1.500; }
.dg-h { stroke: #f0f0f0; fill: none; stroke-width: 3; }
.d-line { stroke: #fbc9bb; fill: none; stroke-width: 1.300; }
.d-mark { stroke: #fbc9bb; fill: #fbf2ef; stroke-width: 1.300; }

/* taskbar */
.taskbar { height: 40px; flex: none; display: flex; background: linear-gradient(90deg, #1f3a44, #1f3540 55%, #1b2a41); color: #fff; }
.tb-start { width: 48px; display: flex; align-items: center; justify-content: center; }
.tb-start svg { width: 16px; height: 16px; }
.tb-search { width: 344px; display: flex; align-items: center; background: #333; border: 1px solid #6a6a6a; border-width: 1px 1px 0; color: #d0d0d0; font: 14px "Noto Sans", sans-serif; }
.tb-search svg { width: 16px; height: 16px; margin: 0 12px 0 11px; }
.tb-view { width: 48px; display: flex; align-items: center; justify-content: center; }
.tb-view svg { width: 16px; height: 16px; }
.tb-apps { display: flex; gap: 1px; margin-left: 3px; }
.tb-app { width: 48px; display: flex; align-items: center; justify-content: center; position: relative; }
.tb-app svg { width: 22px; height: 22px; }
.tb-active { background: #4b5e66; }
.tb-open::after, .tb-active::after { content: ""; position: absolute; bottom: 0; left: 4px; right: 4px; height: 2px; background: #76b9ed; }
.tb-active::after { left: 0; right: 0; }
.tb-tray { margin-left: auto; display: flex; padding-right: 5px; align-items: center; height: 40px; font: 12px "Noto Sans", sans-serif; }
.tr { display: flex; align-items: center; justify-content: center; height: 40px; }
.tr-chev, .tr-net, .tr-vol { width: 24px; }
.tr-chev svg { width: 12px; height: 8px; }
.tr-net svg, .tr-vol svg { width: 16px; height: 16px; }
.tr-eng { width: 36px; }
.tr-clock { width: 62px; flex-direction: column; line-height: 18px; }
.tr-note { width: 50px; position: relative; }
.tr-note svg { width: 16px; height: 16px; margin-right: 6px; }
.note-badge { position: absolute; right: 12px; bottom: 8px; width: 15px; height: 15px; border-radius: 50%; background: #333; border: 1px solid #aaa; font: 700 10px/13px "Noto Sans", sans-serif; text-align: center; }
```
